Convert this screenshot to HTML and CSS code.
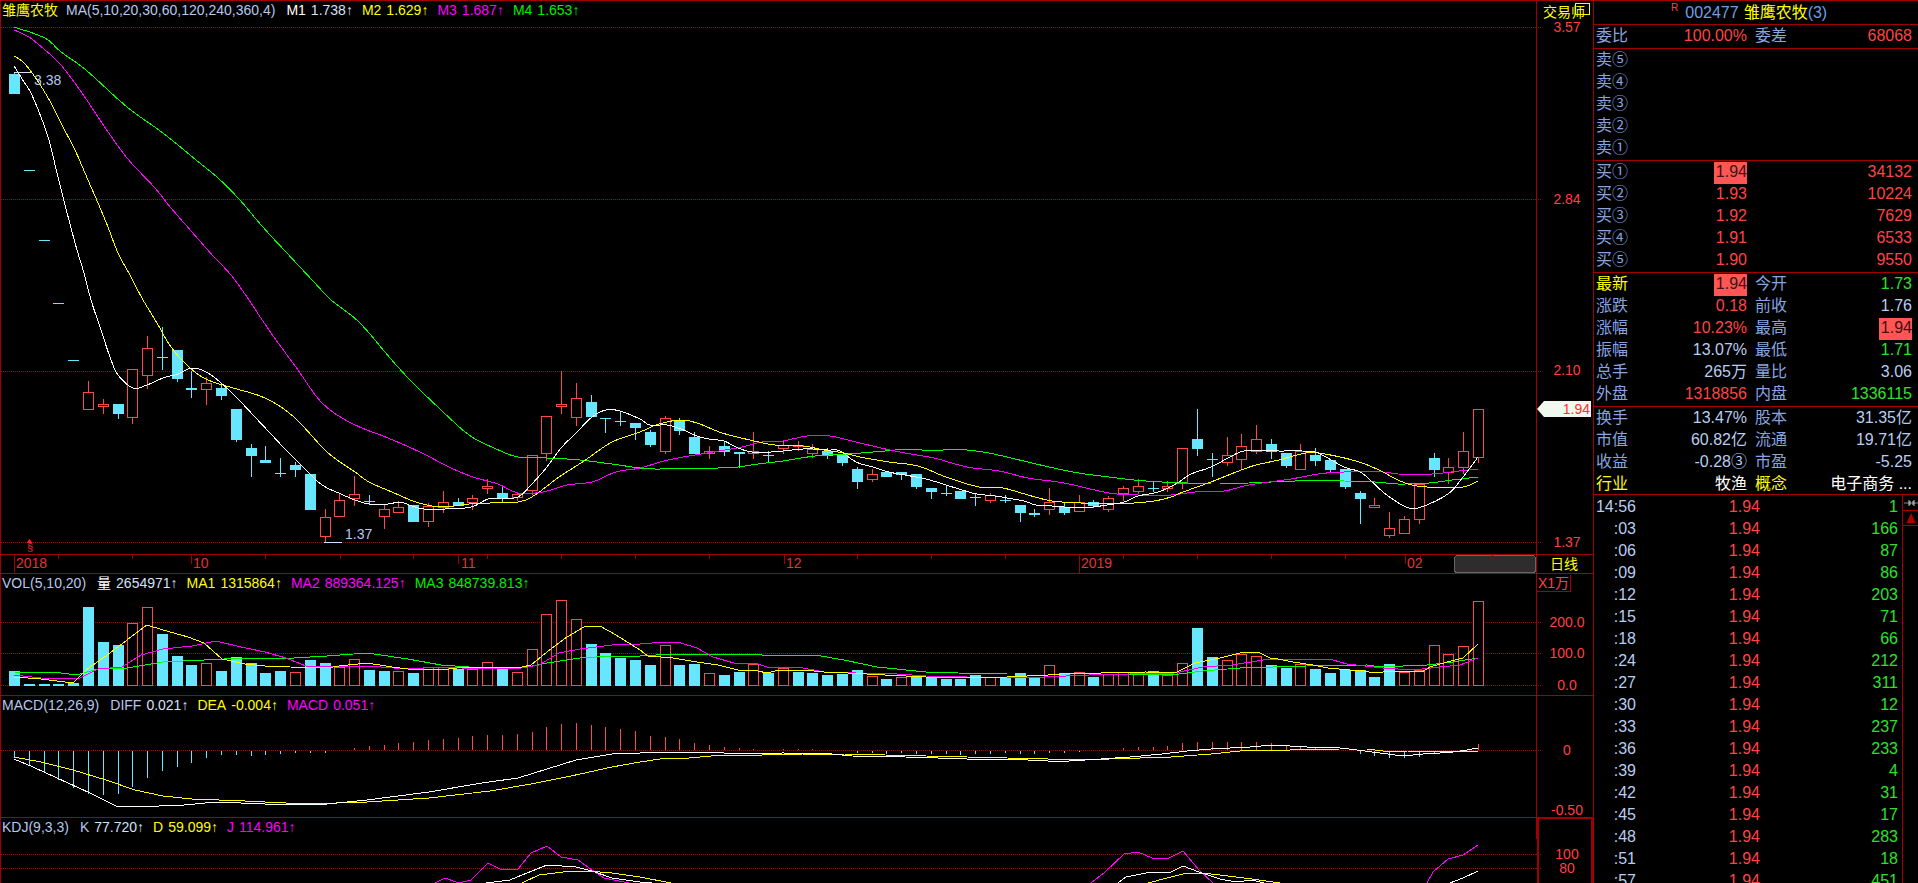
FILE: index.html
```html
<!DOCTYPE html>
<html lang="zh-CN">
<head>
  <meta charset="UTF-8">
  <meta name="viewport" content="width=device-width, initial-scale=1.0">
  <title>雏鹰农牧 002477 日线</title>
  <link rel="stylesheet" href="styles.css">
</head>
<body>
  <div class="app">
    <!-- K line, volume, MACD and KDJ panels -->
    <main class="charts">
      <div class="legend-row legend-top">
        <div class="legend">
          <span class="c-yellow">雏鹰农牧</span>
          <span class="c-title gap-title">MA(5,10,20,30,60,120,240,360,4)</span>
          <span class="c-white gap-title2">M1</span><span class="c-value val">1.738↑</span>
          <span class="c-yellow gap">M2</span><span class="c-yellow val">1.629↑</span>
          <span class="c-magenta gap">M3</span><span class="c-magenta val">1.687↑</span>
          <span class="c-green gap">M4</span><span class="c-green val">1.653↑</span>
        </div>
        <div class="axis-cell trader"><span>交易师</span><i class="trader-box"></i></div>
      </div>
      <svg id="kline" class="plot" width="1592" height="547" viewBox="1 27 1592 547"></svg>

      <div class="legend-row">
        <div class="legend">
          <span class="c-title">VOL(5,10,20)</span>
          <span class="c-white gap-title2">量</span><span class="c-value val">2654971↑</span>
          <span class="c-yellow gap">MA1</span><span class="c-yellow val">1315864↑</span>
          <span class="c-magenta gap">MA2</span><span class="c-magenta val">889364.125↑</span>
          <span class="c-green gap">MA3</span><span class="c-green val">848739.813↑</span>
        </div>
        <div class="axis-cell"><span class="unit">X1万</span></div>
      </div>
      <svg id="vol" class="plot" width="1592" height="101" viewBox="1 595 1592 101"></svg>

      <div class="legend-row">
        <div class="legend">
          <span class="c-title">MACD(12,26,9)</span>
          <span class="c-title gap-title2">DIFF</span><span class="c-value val">0.021↑</span>
          <span class="c-yellow gap">DEA</span><span class="c-yellow val">-0.004↑</span>
          <span class="c-magenta gap">MACD</span><span class="c-magenta val">0.051↑</span>
        </div>
        <div class="axis-cell"></div>
      </div>
      <svg id="macd" class="plot" width="1592" height="101" viewBox="1 717 1592 101"></svg>

      <div class="legend-row">
        <div class="legend">
          <span class="c-title">KDJ(9,3,3)</span>
          <span class="c-title gap-title2">K</span><span class="c-value val">77.720↑</span>
          <span class="c-yellow gap">D</span><span class="c-yellow val">59.099↑</span>
          <span class="c-magenta gap">J</span><span class="c-magenta val">114.961↑</span>
        </div>
        <div class="axis-cell"></div>
      </div>
      <svg id="kdj" class="plot" width="1592" height="44" viewBox="1 839 1592 44"></svg>
    </main>

    <!-- Quote panel -->
    <aside class="quote">
      <div class="q-title">
        <sup class="q-flag">R</sup>
        <span class="q-code">002477</span>
        <span class="c-yellow">雏鹰农牧</span><span class="q-code">(3)</span>
      </div>

      <section class="q-sec">
        <div class="q-row"><span class="lbl">委比</span><span class="num red">100.00%</span><span class="lbl lbl2">委差</span><span class="num red">68068</span></div>
      </section>

      <section class="q-sec">
        <div class="q-row"><span class="lbl">卖⑤</span></div>
        <div class="q-row"><span class="lbl">卖④</span></div>
        <div class="q-row"><span class="lbl">卖③</span></div>
        <div class="q-row"><span class="lbl">卖②</span></div>
        <div class="q-row"><span class="lbl">卖①</span></div>
      </section>

      <section class="q-sec">
        <div class="q-row"><span class="lbl">买①</span><span class="num"><b class="hl">1.94</b></span><span></span><span class="num red">34132</span></div>
        <div class="q-row"><span class="lbl">买②</span><span class="num red">1.93</span><span></span><span class="num red">10224</span></div>
        <div class="q-row"><span class="lbl">买③</span><span class="num red">1.92</span><span></span><span class="num red">7629</span></div>
        <div class="q-row"><span class="lbl">买④</span><span class="num red">1.91</span><span></span><span class="num red">6533</span></div>
        <div class="q-row"><span class="lbl">买⑤</span><span class="num red">1.90</span><span></span><span class="num red">9550</span></div>
      </section>

      <section class="q-sec">
        <div class="q-row"><span class="lbl c-yellow">最新</span><span class="num"><b class="hl">1.94</b></span><span class="lbl lbl2">今开</span><span class="num green">1.73</span></div>
        <div class="q-row"><span class="lbl">涨跌</span><span class="num red">0.18</span><span class="lbl lbl2">前收</span><span class="num">1.76</span></div>
        <div class="q-row"><span class="lbl">涨幅</span><span class="num red">10.23%</span><span class="lbl lbl2">最高</span><span class="num"><b class="hl">1.94</b></span></div>
        <div class="q-row"><span class="lbl">振幅</span><span class="num">13.07%</span><span class="lbl lbl2">最低</span><span class="num green">1.71</span></div>
        <div class="q-row"><span class="lbl">总手</span><span class="num">265万</span><span class="lbl lbl2">量比</span><span class="num">3.06</span></div>
        <div class="q-row"><span class="lbl">外盘</span><span class="num red">1318856</span><span class="lbl lbl2">内盘</span><span class="num green">1336115</span></div>
      </section>

      <section class="q-sec q-info">
        <div class="q-row"><span class="lbl">换手</span><span class="num">13.47%</span><span class="lbl lbl2">股本</span><span class="num">31.35亿</span></div>
        <div class="q-row"><span class="lbl">市值</span><span class="num">60.82亿</span><span class="lbl lbl2">流通</span><span class="num">19.71亿</span></div>
        <div class="q-row"><span class="lbl">收益</span><span class="num">-0.28③</span><span class="lbl lbl2">市盈</span><span class="num">-5.25</span></div>
        <div class="q-row"><span class="lbl c-yellow">行业</span><span class="num c-white">牧渔</span><span class="lbl lbl2 c-yellow">概念</span><span class="num c-white">电子商务 ...</span></div>
      </section>

      <div class="ticks">
        <div class="tick-list">
          <div class="tick"><span>14:56</span><span class="red">1.94</span><span class="green">1</span></div>
          <div class="tick"><span>:03</span><span class="red">1.94</span><span class="green">166</span></div>
          <div class="tick"><span>:06</span><span class="red">1.94</span><span class="green">87</span></div>
          <div class="tick"><span>:09</span><span class="red">1.94</span><span class="green">86</span></div>
          <div class="tick"><span>:12</span><span class="red">1.94</span><span class="green">203</span></div>
          <div class="tick"><span>:15</span><span class="red">1.94</span><span class="green">71</span></div>
          <div class="tick"><span>:18</span><span class="red">1.94</span><span class="green">66</span></div>
          <div class="tick"><span>:24</span><span class="red">1.94</span><span class="green">212</span></div>
          <div class="tick"><span>:27</span><span class="red">1.94</span><span class="green">311</span></div>
          <div class="tick"><span>:30</span><span class="red">1.94</span><span class="green">12</span></div>
          <div class="tick"><span>:33</span><span class="red">1.94</span><span class="green">237</span></div>
          <div class="tick"><span>:36</span><span class="red">1.94</span><span class="green">233</span></div>
          <div class="tick"><span>:39</span><span class="red">1.94</span><span class="green">4</span></div>
          <div class="tick"><span>:42</span><span class="red">1.94</span><span class="green">31</span></div>
          <div class="tick"><span>:45</span><span class="red">1.94</span><span class="green">17</span></div>
          <div class="tick"><span>:48</span><span class="red">1.94</span><span class="green">283</span></div>
          <div class="tick"><span>:51</span><span class="red">1.94</span><span class="green">18</span></div>
          <div class="tick"><span>:57</span><span class="red">1.94</span><span class="green">451</span></div>
        </div>
        <div class="tick-tools">
          <div class="tool tool-pin">
            <svg width="16" height="10" viewBox="0 0 16 10"><path d="M1 5h14" stroke="#8a8a8a"/><path d="M6 2v6M7 3v4M10 3v4M11 2v6" stroke="#c8c8c8"/></svg>
          </div>
          <div class="tool tool-up">
            <svg width="16" height="10" viewBox="0 0 16 10"><path d="M8 0l4.5 10h-9z" fill="#b00000"/></svg>
          </div>
        </div>
      </div>
    </aside>
  </div>

  <script src="script.js"></script>
</body>
</html>
```

FILE: styles.css
```css
/* General Reset */
body {
  margin: 0;
  padding: 0;
  background: #000;
  color: #b8cdf0;
  font-family: "Liberation Sans", "Noto Sans CJK SC", sans-serif;
  overflow: hidden;
}

.app {
  display: flex;
  width: 1918px;
  height: 883px;
  overflow: hidden;
  border-top: 1px solid #a00000;
  box-sizing: border-box;
}

/* Chart Column */
.charts {
  width: 1593px;
  flex: none;
  border-left: 1px solid #a00000;
  box-sizing: border-box;
}

.plot {
  display: block;
  overflow: visible;
}

.legend-row {
  display: flex;
  height: 21px;
  font-size: 14px;
  line-height: 19px;
}

.legend-top {
  height: 26px;
}

.legend {
  display: flex;
  flex: 1;
  padding-left: 1px;
  white-space: nowrap;
}

.gap-title { margin-left: 8px; }
.gap-title2 { margin-left: 11px; }
.gap { margin-left: 9px; }
.val { margin-left: 5px; }

.axis-cell {
  width: 56px;
  flex: none;
  border-left: 1px solid #a00000;
  position: relative;
}

.trader {
  color: #ffff00;
  padding-left: 6px;
  width: 50px;
  line-height: 22px;
}

.trader-box {
  position: absolute;
  left: 38px;
  top: 2px;
  width: 13px;
  height: 10px;
  border: 1px solid #ffff00;
}

.unit {
  display: inline-block;
  height: 16px;
  line-height: 16px;
  padding: 0 1px;
  color: #ff4040;
  border: solid #a00000;
  border-width: 0 1px 1px 0;
}

/* Text Colors */
.c-title { color: #b4c8ee; }
.c-value { color: #d4e0fa; }
.c-white { color: #ffffff; }
.c-yellow { color: #ffff00; }
.c-magenta { color: #ff00ff; }
.c-green { color: #00ee00; }
.red { color: #ff4444; }
.green { color: #2ee02e; }

/* Chart Shapes (drawn by script.js) */
.grid {
  stroke: #b00000;
  stroke-dasharray: 1 1;
  shape-rendering: crispEdges;
}

.rule {
  stroke: #a00000;
  shape-rendering: crispEdges;
}

.line {
  fill: none;
  stroke-width: 1;
  shape-rendering: crispEdges;
}

.l-white { stroke: #ffffff; }
.l-yellow { stroke: #ffff00; }
.l-magenta { stroke: #ff00ff; }
.l-green { stroke: #00ff00; }

.up-body {
  fill: #000;
  stroke: #ff4848;
  shape-rendering: crispEdges;
}

.down-body {
  fill: #66e6ff;
  shape-rendering: crispEdges;
}

.up-wick {
  stroke: #ff4848;
  shape-rendering: crispEdges;
}

.down-wick {
  stroke: #66e6ff;
  shape-rendering: crispEdges;
}

.peak {
  stroke: #d4e0fa;
  shape-rendering: crispEdges;
}

.peak-text {
  fill: #b4c8ee;
  font-size: 14px;
}

.axis-text {
  fill: #ff4040;
  font-size: 14px;
  text-anchor: middle;
}

.date-text {
  fill: #e03434;
  font-size: 14px;
}

.day-text {
  fill: #ffff00;
  font-size: 14px;
  text-anchor: middle;
}

.thumb {
  fill: #2d2d2d;
  stroke: #666;
  shape-rendering: crispEdges;
}

.price-tag {
  fill: #f0f8f0;
}

.tag-text {
  fill: #ff3030;
  font-size: 14px;
  text-anchor: end;
}

.box {
  fill: none;
  stroke: #a00000;
  stroke-width: 2;
  shape-rendering: crispEdges;
}

.mark {
  fill: #ff2020;
}

.mark-text {
  fill: #ff2020;
  font-size: 11px;
  text-anchor: middle;
}

/* Quote Panel */
.quote {
  width: 325px;
  flex: none;
  border-left: 1px solid #a00000;
  box-sizing: border-box;
  font-size: 16px;
  line-height: 19px;
}

.q-title {
  display: flex;
  align-items: baseline;
  height: 23px;
  padding-left: 77px;
  line-height: 23px;
  border-bottom: 1px solid #a00000;
}

.q-flag {
  margin-right: 7px;
  color: #ff4040;
  font-size: 10px;
  line-height: 10px;
  align-self: flex-start;
  margin-top: 2px;
}

.q-code {
  color: #6f9fe4;
  margin-right: 5px;
}

.q-code:last-child {
  margin-right: 0;
}

.q-sec {
  padding-top: 1px;
  border-bottom: 1px solid #a00000;
}

.q-info {
  height: 86px;
}

.q-row {
  display: grid;
  grid-template-columns: 32px 119px 40px 125px;
  height: 22px;
  padding-left: 2px;
  white-space: nowrap;
}

.lbl {
  color: #86a5e0;
}

.lbl.c-yellow {
  color: #ffff00;
}

.lbl2 {
  padding-left: 8px;
}

.num {
  text-align: right;
}

.hl {
  display: inline-block;
  height: 22px;
  padding-left: 2px;
  font-weight: normal;
  color: #401010;
  background: #ff5555;
}

/* Tick List */
.ticks {
  display: flex;
}

.tick-list {
  width: 308px;
  flex: none;
  padding-top: 2px;
  box-sizing: border-box;
}

.tick {
  display: grid;
  grid-template-columns: 42px 124px 138px;
  height: 22px;
  text-align: right;
}

.tick-tools {
  flex: 1;
  height: 400px;
  border-left: 1px solid #a00000;
}

.tool {
  display: flex;
  justify-content: center;
  align-items: center;
  border-bottom: 1px solid #a00000;
}

.tool-pin {
  height: 15px;
}

.tool-up {
  height: 14px;
}
```

FILE: script.js
```js
// candle data in screen pixels: [bodyTop, bodyBottom, high, low, 'r' up | 'c' down]
const candles = [
  [74,93,72,93,'c'],[170,170,170,170,'c'],[240,240,240,240,'c'],[303,303,303,303,'c'],[360,360,360,360,'c'],
  [392,409,381,409,'r'],[404,406,399,413,'r'],[404,413,404,418,'c'],[369,417,369,423,'r'],[348,375,336,388,'r'],
  [357,357,327,369,'c'],[350,378,350,381,'c'],[388,389,371,397,'c'],[383,389,377,404,'r'],[388,395,385,399,'c'],
  [409,439,409,441,'c'],[448,455,444,476,'c'],[460,462,446,462,'c'],[473,473,458,476,'c'],[465,469,462,476,'c'],
  [474,509,474,509,'c'],[517,536,509,542,'r'],[500,516,494,516,'r'],[494,498,476,505,'r'],[501,501,495,504,'c'],
  [509,516,505,528,'r'],[507,512,501,512,'r'],[505,521,505,521,'c'],[506,521,503,526,'r'],[502,507,491,512,'r'],
  [502,505,498,505,'c'],[498,502,495,509,'r'],[486,488,479,493,'r'],[493,498,487,502,'c'],[494,497,492,500,'r'],
  [455,490,455,494,'r'],[416,453,416,460,'r'],[404,406,371,413,'r'],[398,417,383,425,'r'],[402,416,395,416,'c'],
  [418,418,418,432,'c'],[421,421,412,425,'c'],[423,427,423,439,'c'],[432,444,430,446,'c'],[418,451,416,453,'r'],
  [420,430,418,434,'c'],[437,453,432,453,'c'],[451,453,446,458,'r'],[446,451,441,455,'c'],[452,453,452,467,'c'],
  [451,453,432,458,'r'],[455,455,451,462,'c'],[445,448,440,453,'r'],[445,446,441,450,'r'],[449,453,444,457,'r'],
  [451,455,448,458,'c'],[455,462,455,465,'c'],[469,481,467,488,'c'],[474,479,469,481,'r'],[472,476,472,476,'c'],
  [472,474,472,479,'c'],[474,486,474,488,'c'],[488,491,488,498,'c'],[493,493,486,495,'c'],[491,498,491,498,'c'],
  [497,497,494,505,'c'],[495,500,493,502,'r'],[500,500,495,502,'c'],[505,512,505,521,'c'],[513,514,509,516,'c'],
  [502,509,488,514,'r'],[507,512,502,514,'c'],[502,511,495,511,'r'],[502,505,500,507,'c'],[498,509,496,511,'r'],
  [488,493,486,500,'r'],[486,491,479,493,'r'],[488,488,482,491,'c'],[486,488,481,491,'r'],[448,483,448,488,'r'],
  [439,448,409,455,'c'],[459,459,453,476,'c'],[455,462,437,465,'r'],[446,459,434,469,'r'],[439,451,425,453,'r'],
  [444,451,439,458,'c'],[453,465,453,467,'c'],[451,469,444,469,'r'],[455,460,448,465,'c'],[460,469,460,472,'c'],
  [469,486,469,488,'c'],[493,498,491,523,'c'],[505,507,498,507,'r'],[528,535,512,537,'r'],[519,533,516,533,'r'],
  [484,519,484,523,'r'],[458,469,453,476,'c'],[467,472,458,483,'r'],[451,467,432,473,'r'],[409,457,409,462,'r']
];

// volume bar tops, 'c' bars are filled and 'r' bars hollow
const volumes = [
  [671,'c'],[684,'c'],[684,'c'],[684,'c'],[683,'c'],[607,'c'],[642,'c'],[645,'c'],[623,'r'],[607,'r'],
  [634,'c'],[656,'c'],[665,'c'],[663,'r'],[671,'c'],[657,'c'],[663,'c'],[673,'c'],[671,'c'],[672,'r'],
  [660,'c'],[663,'c'],[667,'r'],[659,'r'],[670,'c'],[671,'c'],[671,'r'],[673,'c'],[667,'r'],[667,'r'],
  [669,'c'],[669,'r'],[662,'r'],[668,'c'],[672,'r'],[649,'r'],[614,'r'],[600,'r'],[619,'r'],[644,'c'],
  [653,'c'],[658,'c'],[660,'c'],[665,'c'],[645,'r'],[665,'c'],[664,'c'],[673,'r'],[675,'c'],[672,'c'],
  [664,'r'],[673,'c'],[668,'r'],[672,'c'],[673,'c'],[675,'c'],[674,'c'],[670,'c'],[676,'r'],[679,'c'],
  [677,'r'],[676,'c'],[677,'c'],[679,'c'],[679,'c'],[675,'c'],[677,'r'],[678,'c'],[673,'c'],[678,'c'],
  [665,'r'],[673,'c'],[672,'r'],[677,'c'],[674,'r'],[672,'r'],[672,'r'],[671,'c'],[675,'r'],[663,'r'],
  [628,'c'],[657,'c'],[660,'r'],[654,'r'],[656,'r'],[665,'c'],[668,'c'],[664,'r'],[669,'c'],[673,'c'],
  [670,'c'],[670,'c'],[677,'c'],[664,'c'],[672,'r'],[670,'r'],[645,'r'],[654,'r'],[646,'r'],[601,'r']
];

// MACD histogram ends, zero line is at y=750
const macdBars = [
  757,764,772,779,787,793,794,793,786,777,770,766,762,757,754,754,755,754,753,752,
  752,752,750,748,746,745,743,742,740,739,738,736,735,735,734,732,727,724,723,725,
  727,729,731,736,737,739,743,745,747,748,749,750,749,749,749,750,750,752,752,753,
  752,753,753,753,754,753,753,752,753,753,752,752,751,750,750,748,747,747,746,743,
  742,742,742,742,742,743,745,746,748,749,750,753,755,757,757,756,753,750,750,744
];

const ma1 = '14,66 24,82 31,93 41,117 49,140 57,173 63,197 75,243 84,273 91,300 100,327 110,357 118,375 133,388 147,385 163,378 178,374 192,368 206,372 220,382 237,398 255,417 269,432 286,450 306,470 322,485 341,494 355,500 369,504 388,504 400,502 412,506 424,509 445,509 471,507 488,499 502,498 518,497 531,485 547,467 561,448 576,433 592,417 606,410 620,411 640,419 650,425 667,425 681,429 697,436 709,439 724,441 738,448 752,452 771,452 783,451 803,449 813,449 828,450 840,451 856,462 873,467 889,472 905,475 926,479 946,485 962,490 977,494 995,496 1007,498 1024,501 1036,505 1052,506 1064,507 1079,508 1093,507 1107,505 1124,502 1138,496 1154,493 1166,489 1179,482 1191,474 1211,467 1228,458 1244,451 1269,450 1279,451 1302,451 1318,453 1344,467 1362,473 1383,492 1406,507 1421,507 1448,494 1463,477 1478,457';
const ma2 = '14,56 24,63 37,80 51,103 63,127 75,150 88,180 98,203 108,227 118,253 131,277 143,300 157,323 171,347 190,368 208,380 233,388 265,398 294,417 327,452 355,472 369,482 392,492 416,502 441,507 469,504 490,503 518,502 535,495 559,477 584,461 612,442 640,432 656,425 679,420 697,423 722,433 750,440 775,445 803,446 824,450 844,453 860,457 889,462 918,466 946,477 979,487 1003,488 1028,495 1052,501 1081,503 1109,504 1134,503 1154,501 1171,497 1183,492 1211,482 1236,472 1256,465 1279,460 1306,453 1325,454 1356,461 1379,470 1398,480 1417,486 1452,488 1467,486 1478,481';
const ma3 = '14,30 29,37 45,50 61,65 82,93 102,123 127,158 155,188 171,208 192,232 214,257 231,275 249,300 271,333 298,370 322,403 351,423 388,438 420,452 449,467 473,477 498,484 518,493 543,492 567,485 592,482 616,472 640,468 664,461 689,456 713,452 742,447 762,442 783,441 807,436 830,436 852,441 881,448 905,453 934,458 967,467 999,471 1028,478 1064,483 1109,493 1138,495 1171,495 1195,492 1224,491 1249,485 1291,479 1318,474 1344,472 1383,472 1398,474 1432,474 1459,471 1478,469';
const ma4 = '14,27 45,38 61,52 86,70 127,107 163,133 196,160 218,178 239,199 261,225 286,252 314,282 331,300 359,322 390,358 412,382 441,410 469,435 494,448 518,457 547,458 580,460 612,464 640,468 660,469 681,468 718,468 738,467 758,464 783,461 815,456 848,454 885,451 909,449 934,451 954,449 983,452 1007,457 1036,464 1073,472 1101,476 1134,480 1162,482 1187,483 1220,483 1249,483 1295,481 1344,481 1375,482 1398,484 1429,483 1452,480 1478,477';

const vma1 = '14,677 41,679 73,683 86,670 110,653 127,640 147,625 163,630 188,637 204,643 222,659 245,664 265,666 290,667 327,668 339,666 367,663 392,667 408,669 441,670 465,667 490,667 522,667 531,665 547,652 567,637 584,627 600,626 616,635 640,650 648,656 673,658 697,662 718,665 738,670 758,671 767,673 779,670 803,670 824,672 848,673 885,675 926,677 967,677 1007,677 1048,675 1073,673 1101,673 1146,672 1175,673 1195,663 1220,658 1240,653 1258,652 1270,658 1278,659 1293,662 1313,665 1328,668 1350,670 1365,671 1373,673 1383,672 1407,671 1422,672 1430,667 1447,662 1463,658 1478,644';
const vma2 = '14,675 41,678 78,679 98,669 122,667 141,655 163,649 192,646 216,641 241,647 265,652 286,658 306,666 335,667 367,666 408,669 441,667 482,669 522,668 539,665 559,653 580,649 612,645 640,644 664,642 681,643 697,648 713,657 734,663 758,664 767,667 803,668 824,672 856,673 897,674 926,676 967,677 1044,677 1089,675 1130,674 1175,673 1203,667 1232,665 1263,660 1293,659 1322,659 1333,660 1347,664 1383,668 1413,670 1440,667 1460,665 1478,658';
const vma3 = '14,672 61,673 76,675 98,669 127,668 163,662 204,660 245,658 294,658 327,656 367,653 408,659 441,665 469,667 522,668 547,663 580,658 612,656 640,656 673,654 713,654 762,655 790,656 815,655 844,660 877,667 926,672 958,673 1007,674 1089,674 1171,675 1203,671 1240,668 1273,667 1307,666 1367,665 1380,667 1427,665 1453,662 1478,658';

const diff = '14,759 33,767 57,778 90,793 116,806 135,807 184,805 216,802 265,804 327,804 367,800 429,792 482,783 518,778 547,769 576,760 612,754 640,753 660,752 701,752 746,754 783,753 832,754 852,756 905,757 938,758 967,759 1007,759 1048,761 1069,761 1101,759 1130,757 1162,754 1187,751 1211,749 1250,747 1273,745 1307,747 1340,748 1357,750 1380,753 1403,756 1423,754 1440,753 1453,752 1467,750 1478,748';
const dea = '14,757 41,762 73,770 106,780 135,790 163,796 192,799 245,801 306,804 367,802 429,798 490,791 531,784 571,776 612,767 640,762 660,759 689,758 722,755 762,755 803,754 844,754 885,755 926,756 967,757 1007,758 1048,759 1109,759 1171,757 1211,754 1250,750 1290,750 1340,749 1367,749 1383,751 1407,751 1447,752 1478,751';

const kdjLines = [
  ['l-magenta', '435,883 445,878 459,883 471,880 488,863 500,869 518,869 531,853 547,846 561,857 578,860 592,870 604,878 629,883'],
  ['l-magenta', '1091,883 1105,872 1124,854 1138,852 1152,858 1167,859 1183,851 1199,870 1213,883'],
  ['l-magenta', '1427,883 1433,872 1448,859 1463,855 1478,845'],
  ['l-yellow', '522,883 539,875 571,871 588,871 612,873 640,877 671,883'],
  ['l-yellow', '1148,883 1167,878 1183,874 1203,873 1228,876 1252,879 1280,883'],
  ['l-white', '486,883 510,880 522,875 547,865 576,867 592,871 612,878 640,882 652,883'],
  ['l-white', '1118,883 1126,877 1146,873 1171,872 1183,866 1199,872 1220,879 1236,882 1252,880 1264,883'],
  ['l-white', '1450,883 1463,878 1478,871']
];

const AXIS_X = 1536;
const LABEL_X = 1567;

function barLeft(i) {
  return Math.round(14.5 + 14.787 * i - 5.5);
}

function hline(y, x1, x2, cls) {
  return `<line class="${cls}" x1="${x1}" x2="${x2}" y1="${y + 0.5}" y2="${y + 0.5}"/>`;
}

function vline(x, y1, y2, cls) {
  return `<line class="${cls}" x1="${x + 0.5}" x2="${x + 0.5}" y1="${y1}" y2="${y2}"/>`;
}

function poly(points, cls) {
  return `<polyline class="line ${cls}" points="${points}"/>`;
}

// resample hand-read curve points through a Catmull-Rom spline
function smooth(points) {
  const p = points.split(' ').map(s => s.split(',').map(Number));
  const out = [];
  for (let i = 0; i < p.length - 1; i++) {
    const a = p[Math.max(i - 1, 0)];
    const b = p[i];
    const c = p[i + 1];
    const d = p[Math.min(i + 2, p.length - 1)];
    for (let t = 0; t < 1; t += 0.25) {
      const coord = k => 0.5 * (2 * b[k] + (c[k] - a[k]) * t +
        (2 * a[k] - 5 * b[k] + 4 * c[k] - d[k]) * t * t +
        (3 * b[k] - a[k] - 3 * c[k] + d[k]) * t * t * t);
      out.push(`${coord(0).toFixed(1)},${coord(1).toFixed(1)}`);
    }
  }
  out.push(p[p.length - 1].join(','));
  return out.join(' ');
}

function gridLine(y) {
  return hline(y, 1, AXIS_X, 'grid') + hline(y, AXIS_X, AXIS_X + 5, 'grid');
}

function axisLabel(y, text) {
  return `<text class="axis-text" x="${LABEL_X}" y="${y + 5}">${text}</text>`;
}

function drawKline() {
  let svg = '';

  [27, 199, 371, 542].forEach(y => { svg += gridLine(y); });

  candles.forEach((c, i) => {
    const x = barLeft(i);
    const up = c[4] === 'r';
    svg += vline(x + 5, c[2], c[3] + 1, up ? 'up-wick' : 'down-wick');
    if (c[1] - c[0] < 1) {
      svg += hline(c[0], x, x + 11, up ? 'up-wick' : 'down-wick');
    } else if (up) {
      svg += `<rect class="up-body" x="${x + 0.5}" y="${c[0] + 0.5}" width="10" height="${c[1] - c[0]}"/>`;
    } else {
      svg += `<rect class="down-body" x="${x}" y="${c[0]}" width="11" height="${c[1] - c[0] + 1}"/>`;
    }
  });

  svg += poly(smooth(ma4), 'l-green') + poly(smooth(ma3), 'l-magenta') +
    poly(smooth(ma2), 'l-yellow') + poly(smooth(ma1), 'l-white');

  // highest and lowest price marks
  svg += hline(72, 14, 31, 'peak') + `<text class="peak-text" x="34" y="85">3.38</text>`;
  svg += hline(542, 324, 342, 'peak') + `<text class="peak-text" x="345" y="539">1.37</text>`;

  // split mark
  svg += `<path class="mark" d="M29.5 539l3 4h-6z"/><text class="mark-text" x="30" y="551">§</text>`;

  // axis
  svg += vline(AXIS_X, 27, 574, 'rule');
  svg += axisLabel(27, '3.57') + axisLabel(199, '2.84') + axisLabel(370, '2.10') + axisLabel(542, '1.37');
  svg += `<polygon class="price-tag" points="1537,409 1544,401 1591,401 1591,417 1544,417"/>`;
  svg += `<text class="tag-text" x="1590" y="414">1.94</text>`;

  // date strip
  svg += `<rect class="thumb" x="1454.5" y="555.5" width="81" height="17" rx="3"/>`;
  svg += hline(554, 1, 1593, 'rule') + hline(573, 1, 1593, 'rule');
  [58, 132, 265, 340, 413, 487, 561, 635, 709, 857, 931, 1005, 1123, 1197, 1271, 1345, 1420, 1492].forEach(x => {
    svg += vline(x, 554, 559, 'rule');
  });
  [191, 458, 784, 1405].forEach(x => { svg += vline(x, 554, 564, 'rule'); });
  [14, 1079].forEach(x => { svg += vline(x, 554, 573, 'rule'); });
  [['2018', 16], ['10', 193], ['11', 461], ['12', 786], ['2019', 1081], ['02', 1407]].forEach(d => {
    svg += `<text class="date-text" x="${d[1]}" y="568">${d[0]}</text>`;
  });
  svg += `<text class="day-text" x="1564" y="569">日线</text>`;

  document.getElementById('kline').innerHTML = svg;
}

function drawVol() {
  let svg = '';

  [622, 653, 685].forEach(y => { svg += gridLine(y); });

  volumes.forEach((v, i) => {
    const x = barLeft(i);
    if (v[1] === 'r') {
      svg += `<rect class="up-body" x="${x + 0.5}" y="${v[0] + 0.5}" width="10" height="${685 - v[0]}"/>`;
    } else {
      svg += `<rect class="down-body" x="${x}" y="${v[0]}" width="11" height="${686 - v[0]}"/>`;
    }
  });

  svg += poly(vma3, 'l-green') + poly(vma2, 'l-magenta') + poly(vma1, 'l-yellow');

  svg += vline(AXIS_X, 595, 696, 'rule') + hline(695, 1, 1593, 'rule');
  svg += axisLabel(622, '200.0') + axisLabel(653, '100.0') + axisLabel(685, '0.0');

  document.getElementById('vol').innerHTML = svg;
}

function drawMacd() {
  let svg = gridLine(750);

  macdBars.forEach((y, i) => {
    if (y === 750) return;
    const x = barLeft(i) + 5;
    svg += y < 750 ? vline(x, y, 750, 'up-wick') : vline(x, 751, y + 1, 'down-wick');
  });

  svg += poly(dea, 'l-yellow') + poly(diff, 'l-white');

  svg += vline(AXIS_X, 717, 818, 'rule') + hline(817, 1, 1593, 'rule');
  svg += axisLabel(750, '0') + axisLabel(810, '-0.50');

  document.getElementById('macd').innerHTML = svg;
}

function drawKdj() {
  let svg = gridLine(854) + gridLine(868);

  kdjLines.forEach(l => { svg += poly(l[1], l[0]); });

  svg += `<rect class="box" x="1538" y="818" width="54" height="80"/>`;
  svg += axisLabel(854, '100') + axisLabel(868, '80');

  document.getElementById('kdj').innerHTML = svg;
}

drawKline();
drawVol();
drawMacd();
drawKdj();
```
